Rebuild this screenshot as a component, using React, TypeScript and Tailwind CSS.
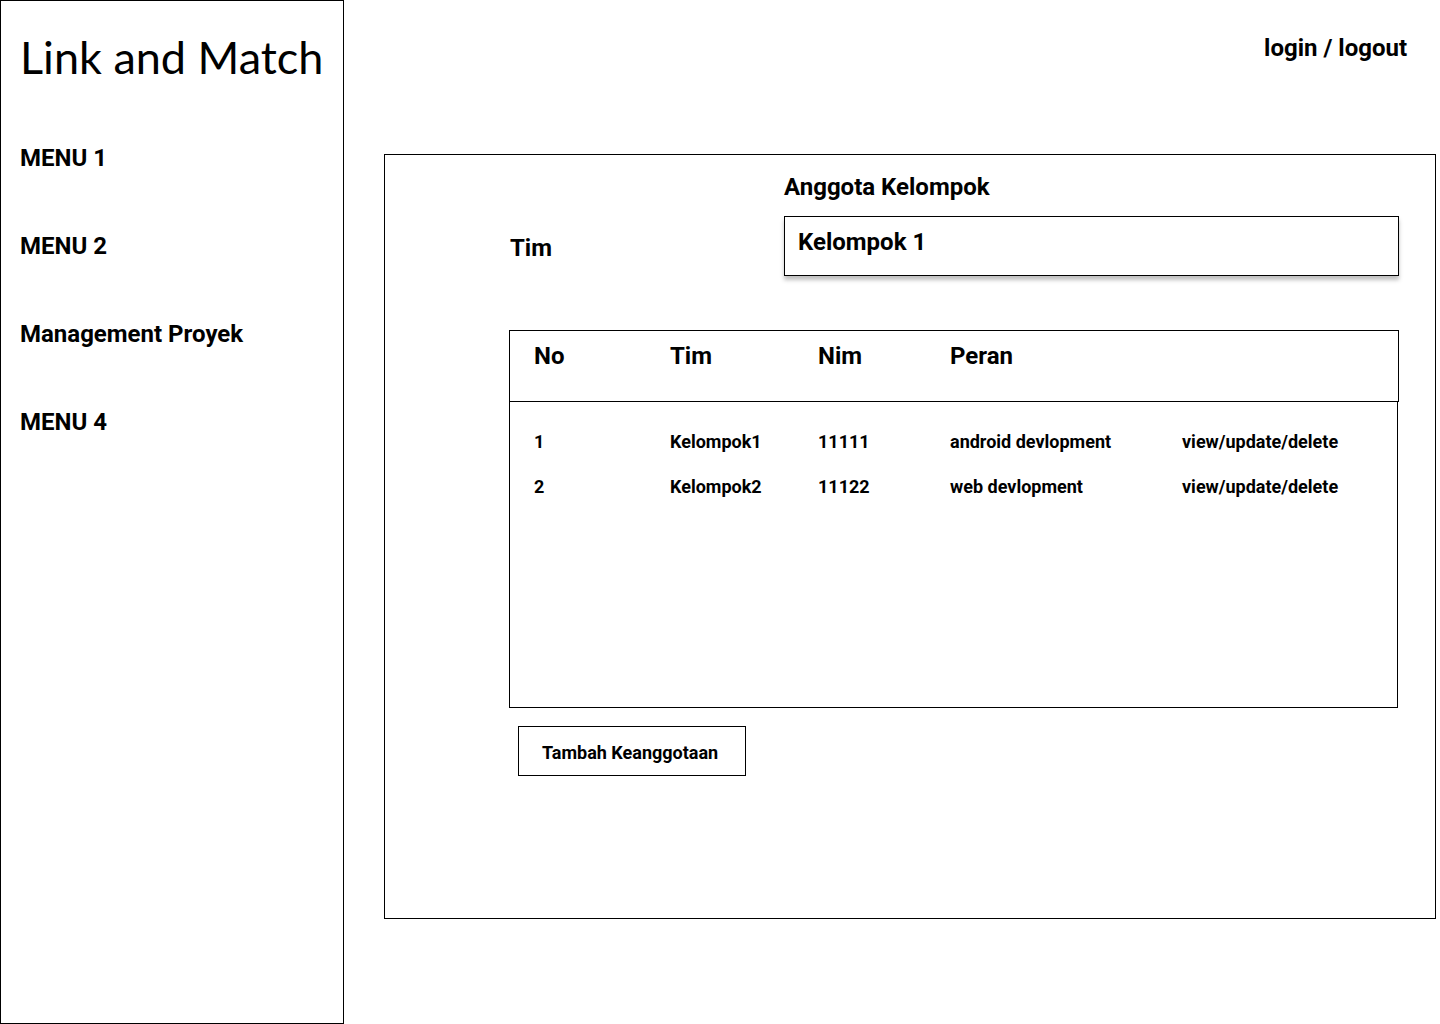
const rows = [
  { no: "1", tim: "Kelompok1", nim: "11111", peran: "android devlopment" },
  { no: "2", tim: "Kelompok2", nim: "11122", peran: "web devlopment" },
];

export default function App() {
  return (
    <div className="flex h-[1024px] w-[1440px] bg-white font-['Roboto',sans-serif] text-black">
      {/* Sidebar */}
      <aside className="flex h-full w-[344px] shrink-0 flex-col border border-black px-[19px]">
        <h1 className="mt-[29px] font-['Lato',sans-serif] text-[45px] leading-[54px] font-normal whitespace-nowrap">
          Link and Match
        </h1>
        <nav className="mt-[60px] flex flex-col gap-[60px] text-[24px] leading-[28px] font-bold">
          <a>MENU 1</a>
          <a>MENU 2</a>
          <a>Management Proyek</a>
          <a>MENU 4</a>
        </nav>
      </aside>

      {/* Main */}
      <main className="flex flex-1 flex-col pr-1 pl-10">
        <div className="flex justify-end pt-[34px] pr-[29px] text-[24px] leading-[28px] font-bold">
          login / logout
        </div>

        <section className="mt-[92px] flex h-[765px] flex-col border border-black pr-9 pl-[124px]">
          <div className="mt-[18px] flex">
            <div className="w-[275px] pt-[61px] pl-px text-[24px] leading-[28px] font-bold">Tim</div>
            <div className="flex flex-1 flex-col">
              <div className="text-[24px] leading-[28px] font-bold">Anggota Kelompok</div>
              <div className="mt-[15px] h-[60px] border border-black bg-white px-[13px] pt-[11px] text-[24px] leading-[28px] font-bold shadow-[0_4px_4px_rgba(0,0,0,0.25)]">
                Kelompok 1
              </div>
            </div>
          </div>

          <div className="mt-[54px] flex flex-col">
            <div className="grid h-[72px] grid-cols-[136px_148px_132px_1fr] border border-black pt-[11px] pl-[24px] text-[24px] leading-[28px] font-bold">
              <span>No</span>
              <span>Tim</span>
              <span>Nim</span>
              <span>Peran</span>
            </div>
            <div className="-mt-px mr-px h-[307px] border border-black pt-[29px] pl-[24px] text-[18px] leading-[21px] font-bold">
              {rows.map((r) => (
                <div key={r.no} className="mb-[24px] grid grid-cols-[136px_148px_132px_232px_1fr]">
                  <span>{r.no}</span>
                  <span>{r.tim}</span>
                  <span>{r.nim}</span>
                  <span>{r.peran}</span>
                  <span>view/update/delete</span>
                </div>
              ))}
            </div>
          </div>

          <button className="mt-[18px] ml-[9px] h-[50px] w-[228px] border border-black pt-[2px] pl-[23px] text-left text-[18px] leading-[21px] font-bold">
            Tambah Keanggotaan
          </button>
        </section>
      </main>
    </div>
  );
}
